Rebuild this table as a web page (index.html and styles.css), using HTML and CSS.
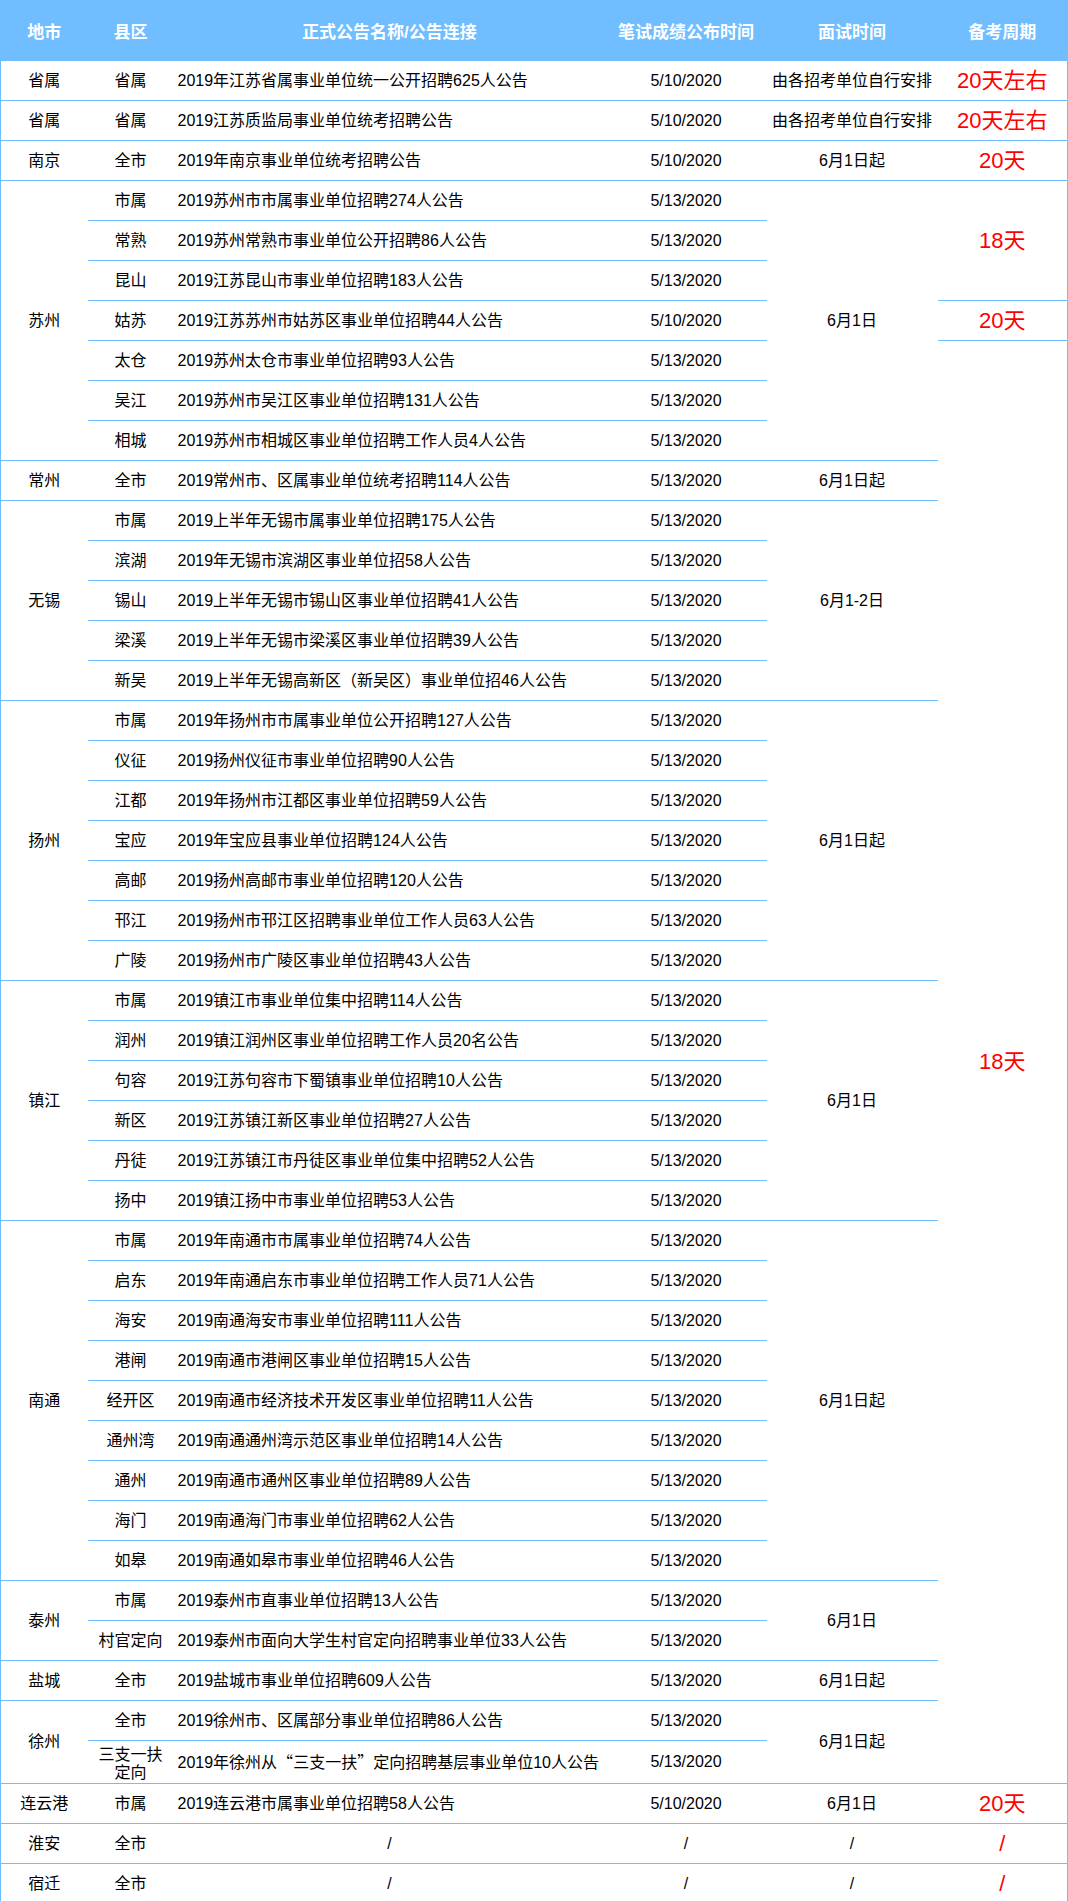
FILE: index.html
```html
<!DOCTYPE html>
<html lang="zh-CN">
<head>
<meta charset="utf-8">
<title>江苏事业单位招聘面试时间汇总</title>
<link rel="stylesheet" href="styles.css">
</head>
<body>
<table class="sheet">
  <colgroup>
    <col class="c-city">
    <col class="c-dist">
    <col class="c-name">
    <col class="c-date">
    <col class="c-iv">
    <col class="c-prep">
  </colgroup>
  <thead>
    <tr class="head">
      <th>地市</th><th>县区</th><th>正式公告名称/公告连接</th><th>笔试成绩公布时间</th><th>面试时间</th><th>备考周期</th>
    </tr>
  </thead>
  <tbody>
    <tr><td>省属</td><td>省属</td><td class="name">2019年江苏省属事业单位统一公开招聘625人公告</td><td>5/10/2020</td><td>由各招考单位自行安排</td><td class="prep">20天左右</td></tr>
    <tr><td>省属</td><td>省属</td><td class="name">2019江苏质监局事业单位统考招聘公告</td><td>5/10/2020</td><td>由各招考单位自行安排</td><td class="prep">20天左右</td></tr>
    <tr><td>南京</td><td>全市</td><td class="name">2019年南京事业单位统考招聘公告</td><td>5/10/2020</td><td>6月1日起</td><td class="prep">20天</td></tr>

    <tr><td rowspan="7">苏州</td><td>市属</td><td class="name">2019苏州市市属事业单位招聘274人公告</td><td>5/13/2020</td><td rowspan="7">6月1日</td><td class="prep" rowspan="3">18天</td></tr>
    <tr><td>常熟</td><td class="name">2019苏州常熟市事业单位公开招聘86人公告</td><td>5/13/2020</td></tr>
    <tr><td>昆山</td><td class="name">2019江苏昆山市事业单位招聘183人公告</td><td>5/13/2020</td></tr>
    <tr><td>姑苏</td><td class="name">2019江苏苏州市姑苏区事业单位招聘44人公告</td><td>5/10/2020</td><td class="prep">20天</td></tr>
    <tr><td>太仓</td><td class="name">2019苏州太仓市事业单位招聘93人公告</td><td>5/13/2020</td><td class="prep" rowspan="36">18天</td></tr>
    <tr><td>吴江</td><td class="name">2019苏州市吴江区事业单位招聘131人公告</td><td>5/13/2020</td></tr>
    <tr><td>相城</td><td class="name">2019苏州市相城区事业单位招聘工作人员4人公告</td><td>5/13/2020</td></tr>

    <tr><td>常州</td><td>全市</td><td class="name">2019常州市、区属事业单位统考招聘114人公告</td><td>5/13/2020</td><td>6月1日起</td></tr>

    <tr><td rowspan="5">无锡</td><td>市属</td><td class="name">2019上半年无锡市属事业单位招聘175人公告</td><td>5/13/2020</td><td rowspan="5">6月1-2日</td></tr>
    <tr><td>滨湖</td><td class="name">2019年无锡市滨湖区事业单位招58人公告</td><td>5/13/2020</td></tr>
    <tr><td>锡山</td><td class="name">2019上半年无锡市锡山区事业单位招聘41人公告</td><td>5/13/2020</td></tr>
    <tr><td>梁溪</td><td class="name">2019上半年无锡市梁溪区事业单位招聘39人公告</td><td>5/13/2020</td></tr>
    <tr><td>新吴</td><td class="name">2019上半年无锡高新区（新吴区）事业单位招46人公告</td><td>5/13/2020</td></tr>

    <tr><td rowspan="7">扬州</td><td>市属</td><td class="name">2019年扬州市市属事业单位公开招聘127人公告</td><td>5/13/2020</td><td rowspan="7">6月1日起</td></tr>
    <tr><td>仪征</td><td class="name">2019扬州仪征市事业单位招聘90人公告</td><td>5/13/2020</td></tr>
    <tr><td>江都</td><td class="name">2019年扬州市江都区事业单位招聘59人公告</td><td>5/13/2020</td></tr>
    <tr><td>宝应</td><td class="name">2019年宝应县事业单位招聘124人公告</td><td>5/13/2020</td></tr>
    <tr><td>高邮</td><td class="name">2019扬州高邮市事业单位招聘120人公告</td><td>5/13/2020</td></tr>
    <tr><td>邗江</td><td class="name">2019扬州市邗江区招聘事业单位工作人员63人公告</td><td>5/13/2020</td></tr>
    <tr><td>广陵</td><td class="name">2019扬州市广陵区事业单位招聘43人公告</td><td>5/13/2020</td></tr>

    <tr><td rowspan="6">镇江</td><td>市属</td><td class="name">2019镇江市事业单位集中招聘114人公告</td><td>5/13/2020</td><td rowspan="6">6月1日</td></tr>
    <tr><td>润州</td><td class="name">2019镇江润州区事业单位招聘工作人员20名公告</td><td>5/13/2020</td></tr>
    <tr><td>句容</td><td class="name">2019江苏句容市下蜀镇事业单位招聘10人公告</td><td>5/13/2020</td></tr>
    <tr><td>新区</td><td class="name">2019江苏镇江新区事业单位招聘27人公告</td><td>5/13/2020</td></tr>
    <tr><td>丹徒</td><td class="name">2019江苏镇江市丹徒区事业单位集中招聘52人公告</td><td>5/13/2020</td></tr>
    <tr><td>扬中</td><td class="name">2019镇江扬中市事业单位招聘53人公告</td><td>5/13/2020</td></tr>

    <tr><td rowspan="9">南通</td><td>市属</td><td class="name">2019年南通市市属事业单位招聘74人公告</td><td>5/13/2020</td><td rowspan="9">6月1日起</td></tr>
    <tr><td>启东</td><td class="name">2019年南通启东市事业单位招聘工作人员71人公告</td><td>5/13/2020</td></tr>
    <tr><td>海安</td><td class="name">2019南通海安市事业单位招聘111人公告</td><td>5/13/2020</td></tr>
    <tr><td>港闸</td><td class="name">2019南通市港闸区事业单位招聘15人公告</td><td>5/13/2020</td></tr>
    <tr><td>经开区</td><td class="name">2019南通市经济技术开发区事业单位招聘11人公告</td><td>5/13/2020</td></tr>
    <tr><td>通州湾</td><td class="name">2019南通通州湾示范区事业单位招聘14人公告</td><td>5/13/2020</td></tr>
    <tr><td>通州</td><td class="name">2019南通市通州区事业单位招聘89人公告</td><td>5/13/2020</td></tr>
    <tr><td>海门</td><td class="name">2019南通海门市事业单位招聘62人公告</td><td>5/13/2020</td></tr>
    <tr><td>如皋</td><td class="name">2019南通如皋市事业单位招聘46人公告</td><td>5/13/2020</td></tr>

    <tr><td rowspan="2">泰州</td><td>市属</td><td class="name">2019泰州市直事业单位招聘13人公告</td><td>5/13/2020</td><td rowspan="2">6月1日</td></tr>
    <tr><td>村官定向</td><td class="name">2019泰州市面向大学生村官定向招聘事业单位33人公告</td><td>5/13/2020</td></tr>

    <tr><td>盐城</td><td>全市</td><td class="name">2019盐城市事业单位招聘609人公告</td><td>5/13/2020</td><td>6月1日起</td></tr>

    <tr><td rowspan="2">徐州</td><td>全市</td><td class="name">2019徐州市、区属部分事业单位招聘86人公告</td><td>5/13/2020</td><td rowspan="2">6月1日起</td></tr>
    <tr><td class="wrap">三支一扶<br>定向</td><td class="name">2019年徐州从<span class="cjk">“</span>三支一扶<span class="cjk">”</span>定向招聘基层事业单位10人公告</td><td>5/13/2020</td></tr>

    <tr><td>连云港</td><td>市属</td><td class="name">2019连云港市属事业单位招聘58人公告</td><td>5/10/2020</td><td>6月1日</td><td class="prep">20天</td></tr>
    <tr><td>淮安</td><td>全市</td><td>/</td><td>/</td><td>/</td><td class="prep">/</td></tr>
    <tr><td>宿迁</td><td>全市</td><td>/</td><td>/</td><td>/</td><td class="prep">/</td></tr>
  </tbody>
</table>
</body>
</html>
```

FILE: styles.css
```css
html, body {
  margin: 0;
  padding: 0;
  background: #ffffff;
}

body {
  font-family: "Liberation Sans", "Noto Sans CJK SC", sans-serif;
  font-size: 16px;
  color: #000000;
}

.sheet {
  width: 1067px;
  table-layout: fixed;
  border-collapse: collapse;
  border-left: 1px solid #70bdff;
  border-right: 1px solid #70bdff;
}

.c-city { width: 87px; }
.c-dist { width: 86px; }
.c-name { width: 432px; }
.c-date { width: 161px; }
.c-iv { width: 171px; }
.c-prep { width: 130px; }

.head th {
  height: 61px;
  padding: 0;
  background: #70bdff;
  color: #ffffff;
  font-size: 17px;
  font-weight: bold;
  text-align: center;
  vertical-align: middle;
  border: none;
}

tbody td {
  height: 39px;
  padding: 0;
  text-align: center;
  vertical-align: middle;
  border-bottom: 1px solid #70bdff;
  white-space: nowrap;
  line-height: 20px;
}

tbody td.name {
  text-align: left;
  padding-left: 4px;
}

tbody td.prep {
  color: #ff0000;
  font-size: 22px;
}

tbody td.wrap {
  line-height: 18px;
  padding-top: 3px;
}

.cjk {
  font-family: "Noto Sans CJK SC", sans-serif;
}
```
